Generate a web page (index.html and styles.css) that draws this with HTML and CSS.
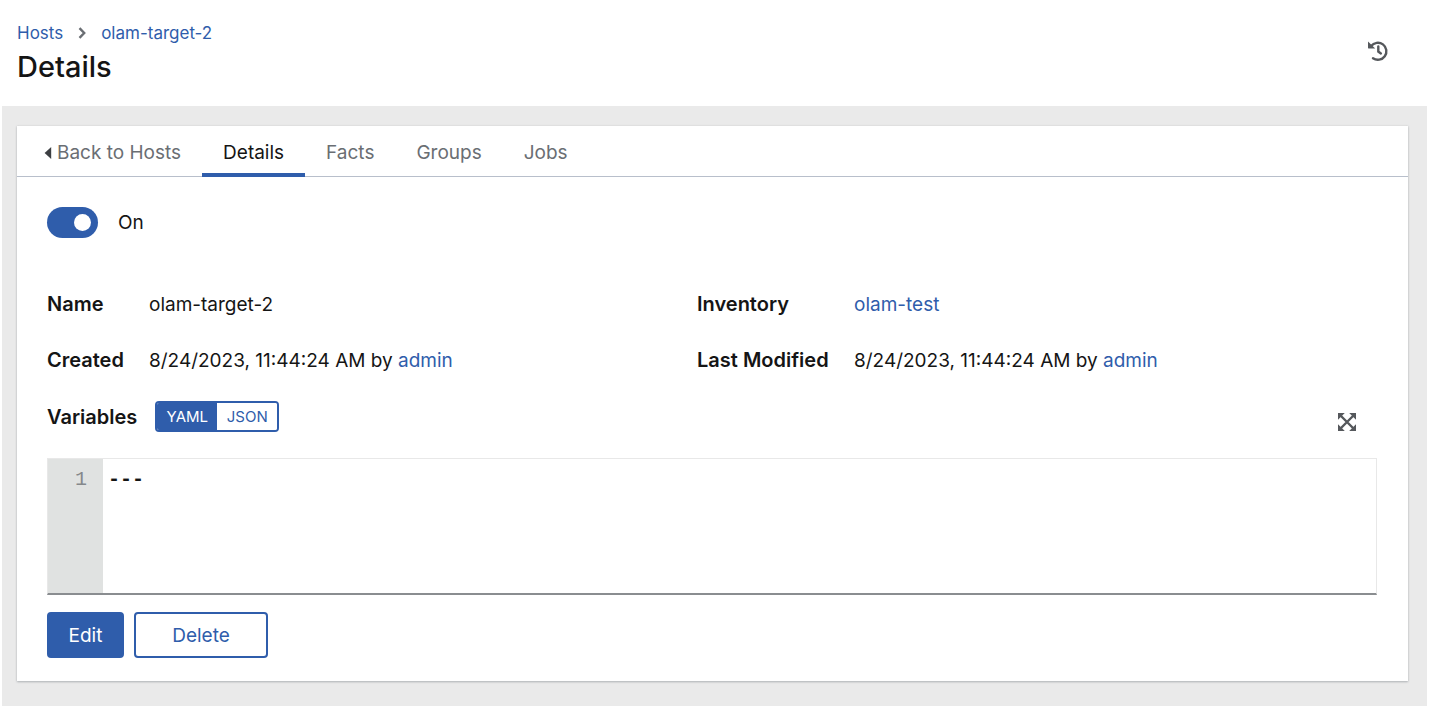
FILE: index.html
```html
<!DOCTYPE html>
<html lang="en">
<head>
<meta charset="utf-8">
<meta name="viewport" content="width=device-width, initial-scale=1">
<title>Host Details</title>
<link rel="stylesheet" href="styles.css">
</head>
<body>
<header class="page-header">
  <div>
    <nav class="breadcrumb" aria-label="Breadcrumb">
      <a href="#hosts">Hosts</a>
      <svg class="crumb-icon" viewBox="0 0 8 12" aria-hidden="true"><path d="M1.5 1.2 6.2 6 1.5 10.8" fill="none" stroke="currentColor" stroke-width="2.4"/></svg>
      <a href="#host">olam-target-2</a>
    </nav>
    <h1 class="page-title">Details</h1>
  </div>
  <button class="icon-button" type="button" aria-label="View activity stream">
    <svg class="history-icon" viewBox="0 0 22 22" aria-hidden="true"><path d="M4.1 6.1A8.5 8.5 0 1 1 6 18.2" fill="none" stroke="currentColor" stroke-width="2.4" stroke-linecap="round"/><path d="M1 1.6 8.2 8.4H1.6Q1 8.4 1 7.8Z" fill="currentColor"/><path d="M11.3 6.4V11.6L13.9 13.4" fill="none" stroke="currentColor" stroke-width="2.4" stroke-linecap="round"/></svg>
  </button>
</header>
<main class="page-main">
  <section class="card">
    <nav class="tabs" aria-label="Host sections">
      <a class="tab tab-back" href="#hosts"><svg class="caret-icon" viewBox="0 0 8 12" aria-hidden="true"><path d="M7.2 0V12L.6 6Z" fill="currentColor"/></svg>Back to Hosts</a>
      <a class="tab tab-current" href="#details" aria-current="page">Details</a>
      <a class="tab" href="#facts">Facts</a>
      <a class="tab" href="#groups">Groups</a>
      <a class="tab" href="#jobs">Jobs</a>
    </nav>
    <div class="card-body">
      <label class="switch"><input class="switch-input" type="checkbox" role="switch" checked>On</label>
      <dl class="details">
        <dt>Name</dt><dd>olam-target-2</dd>
        <dt>Inventory</dt><dd><a href="#inventory">olam-test</a></dd>
        <dt>Created</dt><dd>8/24/2023, 11:44:24 AM by <a href="#admin">admin</a></dd>
        <dt>Last Modified</dt><dd>8/24/2023, 11:44:24 AM by <a href="#admin">admin</a></dd>
      </dl>
      <div class="variables-bar">
        <label class="variables-label" for="variables">Variables</label>
        <div class="format-group">
          <button class="format format-active" type="button" aria-pressed="true">YAML</button>
          <button class="format" type="button" aria-pressed="false">JSON</button>
        </div>
        <button class="icon-button expand-button" type="button" aria-label="Expand input">
          <svg class="expand-icon" viewBox="0 0 18 18" aria-hidden="true"><path d="M3 3 15 15M15 3 3 15" stroke="currentColor" stroke-width="2.4"/><path d="M0 0H6.8L0 6.8ZM18 0V6.8L11.2 0ZM0 18V11.2L6.8 18ZM18 18H11.2L18 11.2Z" fill="currentColor"/></svg>
        </button>
      </div>
      <div class="editor">
        <div class="gutter">1</div>
        <textarea class="code" id="variables" readonly spellcheck="false">---</textarea>
      </div>
      <div class="actions">
        <button class="button button-primary" type="button">Edit</button>
        <button class="button button-secondary" type="button">Delete</button>
      </div>
    </div>
  </section>
</main>
</body>
</html>
```
FILE: styles.css
```css
* { box-sizing: border-box; }

body {
  display: flex;
  flex-direction: column;
  min-height: 100vh;
  margin: 0;
  background: #fff;
  color: #151515;
  font-family: Inter, "Liberation Sans", sans-serif;
  font-size: 19px;
  line-height: 30px;
}

a { color: #2f5dab; text-decoration: none; }
button { font-family: inherit; cursor: pointer; }

.page-header {
  display: flex;
  justify-content: space-between;
  align-items: flex-start;
  padding: 20px 40px 18px 17px;
}

.breadcrumb {
  display: flex;
  align-items: center;
  gap: 15px;
  font-size: 17px;
  line-height: 26px;
}

.crumb-icon { width: 8px; height: 12px; color: #6a6e73; }

.page-title {
  margin: 0;
  font-size: 29px;
  font-weight: 500;
  line-height: 42px;
}

.icon-button {
  display: flex;
  padding: 0;
  border: 0;
  background: none;
  color: #55585c;
}

.page-header .icon-button { margin-top: 20px; }
.history-icon { width: 22px; height: 22px; }

.page-main {
  flex: 1;
  margin: 0 2px;
  padding: 20px 19px 25px 15px;
  background: #eaeaea;
}

.card {
  background: #fff;
  box-shadow: 0 1px 2px #b0b4b8, 0 0 2px #d2d2d2;
}

.tabs {
  display: flex;
  height: 51px;
  padding-left: 8px;
  border-bottom: 1px solid #b8bfcb;
}

.tab {
  display: flex;
  align-items: center;
  height: 51px;
  padding: 6px 21px 0;
  border-bottom: 4px solid transparent;
  color: #6a6e73;
}

.tab-back { gap: 5px; padding-left: 19px; }
.tab-current { border-color: #2f5dab; color: #151515; }
.caret-icon { width: 8px; height: 12px; color: #3c3f42; }

.card-body { padding: 30px 31px 23px 30px; }

.switch {
  display: flex;
  align-items: center;
  gap: 20px;
  width: fit-content;
}

.switch-input {
  display: flex;
  align-items: center;
  justify-content: flex-end;
  width: 51px;
  height: 31px;
  margin: 0;
  padding: 7px;
  border-radius: 16px;
  background: #2f5dab;
  appearance: none;
}

.switch-input::before {
  width: 17px;
  height: 17px;
  border-radius: 50%;
  background: #fff;
  content: "";
}

.details {
  display: grid;
  grid-template-columns: 77px 1fr 132px 1fr;
  align-items: baseline;
  gap: 25px;
  margin: 51px 0 25px;
}

.details dt, .variables-label { font-size: 20px; font-weight: 600; white-space: nowrap; }
.details dd { margin: 0; }

.variables-bar { display: flex; align-items: center; gap: 18px; }

.format-group {
  display: flex;
  overflow: hidden;
  border: 2px solid #2f5dab;
  border-radius: 4px;
}

.format {
  width: 60px;
  height: 27px;
  padding: 0;
  border: 0;
  background: #fff;
  color: #2f5dab;
  font-size: 15px;
}

.format-active { background: #2f5dab; color: #fff; }
.expand-button { margin: 10px 21px 0 auto; }
.expand-icon { width: 18px; height: 18px; }

.editor {
  display: flex;
  height: 137px;
  margin-top: 26px;
  border: 1px solid #e8e8e8;
  border-bottom: 2px solid #8a8d90;
}

.gutter {
  width: 55px;
  padding: 6px 16px;
  background: #e0e2e1;
  color: #85888b;
  font-family: "Liberation Mono", monospace;
  font-size: 20px;
  text-align: right;
}

.code {
  flex: 1;
  padding: 6px 5px;
  border: 0;
  outline: 0;
  background: #fff;
  color: #151515;
  font-family: "Liberation Mono", monospace;
  font-size: 20px;
  font-weight: 700;
  line-height: 30px;
  resize: none;
}

.actions { display: flex; gap: 10px; margin-top: 17px; }

.button {
  height: 46px;
  padding: 0 20px;
  border: 2px solid #2f5dab;
  border-radius: 4px;
  font-size: 19px;
}

.button-primary { width: 77px; padding: 0; background: #2f5dab; color: #fff; }
.button-secondary { width: 134px; background: #fff; color: #2f5dab; }
```
